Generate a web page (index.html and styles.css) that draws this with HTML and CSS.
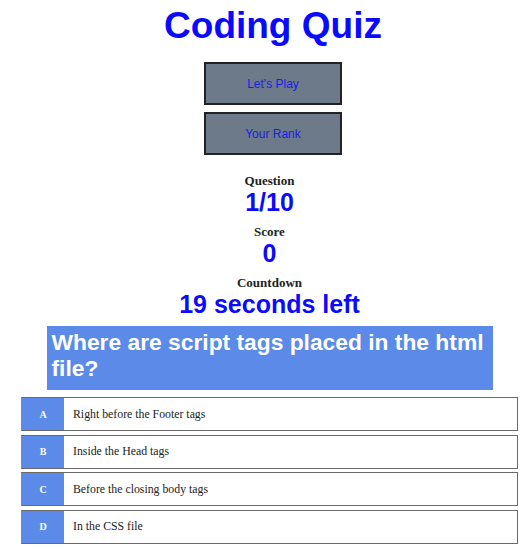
FILE: index.html
```html
<!DOCTYPE html>
<html lang="en">
<head>
<meta charset="utf-8">
<title>Coding Quiz</title>
<link rel="stylesheet" href="styles.css">
</head>
<body>
<div class="page">
  <header class="top">
    <h1 class="title">Coding Quiz</h1>
    <button class="btn btn-first">Let's Play</button>
    <button class="btn">Your Rank</button>
  </header>
  <section class="stats">
    <div class="stat"><div class="label">Question</div><div class="value">1/10</div></div>
    <div class="stat"><div class="label">Score</div><div class="value">0</div></div>
    <div class="stat"><div class="label">Countdown</div><div class="value">19 seconds left</div></div>
  </section>
  <div class="question">Where are script tags placed in the html file?</div>
  <ul class="answers">
    <li class="answer"><span class="letter">A</span><span class="text">Right before the Footer tags</span></li>
    <li class="answer"><span class="letter">B</span><span class="text">Inside the Head tags</span></li>
    <li class="answer"><span class="letter">C</span><span class="text">Before the closing body tags</span></li>
    <li class="answer"><span class="letter">D</span><span class="text">In the CSS file</span></li>
  </ul>
</div>
</body>
</html>
```

FILE: styles.css
```css
body {
  margin: 0;
  background: #ffffff;
  font-family: "Liberation Sans", Arial, sans-serif;
}

.page {
  width: 497px;
  margin-left: 21px;
  display: flex;
  flex-direction: column;
  align-items: center;
}

.top {
  display: flex;
  flex-direction: column;
  align-items: center;
  padding-left: 7px;
}

.title {
  margin: 5px 0 0;
  font-size: 37px;
  line-height: 41px;
  font-weight: bold;
  color: #0a0aff;
}

.btn {
  width: 138px;
  height: 43px;
  margin-top: 7px;
  background: #6c7a89;
  border: 2px solid #222222;
  color: #1c1ce8;
  font-family: "Liberation Sans", Arial, sans-serif;
  font-size: 12px;
  padding: 0;
  box-sizing: border-box;
}

.btn-first {
  margin-top: 16px;
}

.stats {
  margin-top: 18px;
  display: flex;
  flex-direction: column;
  align-items: center;
  gap: 9px;
}

.stat {
  display: flex;
  flex-direction: column;
  align-items: center;
}

.label {
  font-family: "Liberation Serif", "Times New Roman", serif;
  font-weight: bold;
  font-size: 13px;
  line-height: 16px;
  color: #222222;
}

.value {
  font-weight: bold;
  font-size: 25px;
  line-height: 26px;
  color: #0a0aff;
}

.question {
  width: 446px;
  box-sizing: border-box;
  margin-top: 9px;
  padding: 3px 2px 9px 5px;
  background: #5b8ae8;
  color: #ffffff;
  font-weight: bold;
  font-size: 22.8px;
  line-height: 26px;
}

.answers {
  list-style: none;
  margin: 7px 0 0;
  padding: 0;
  width: 497px;
  display: flex;
  flex-direction: column;
  gap: 3.5px;
}

.answer {
  display: flex;
  height: 34px;
  box-sizing: border-box;
  border: 1px solid #6a6a6a;
  border-left-color: #8a8a8a;
}

.letter {
  width: 42px;
  background: #5b8ae8;
  color: #ffffff;
  font-family: "Liberation Serif", "Times New Roman", serif;
  font-weight: bold;
  font-size: 10px;
  display: flex;
  align-items: center;
  justify-content: center;
}

.text {
  display: flex;
  align-items: center;
  padding-left: 9px;
  font-family: "Liberation Serif", "Times New Roman", serif;
  font-size: 11.8px;
  color: #222222;
}
```
